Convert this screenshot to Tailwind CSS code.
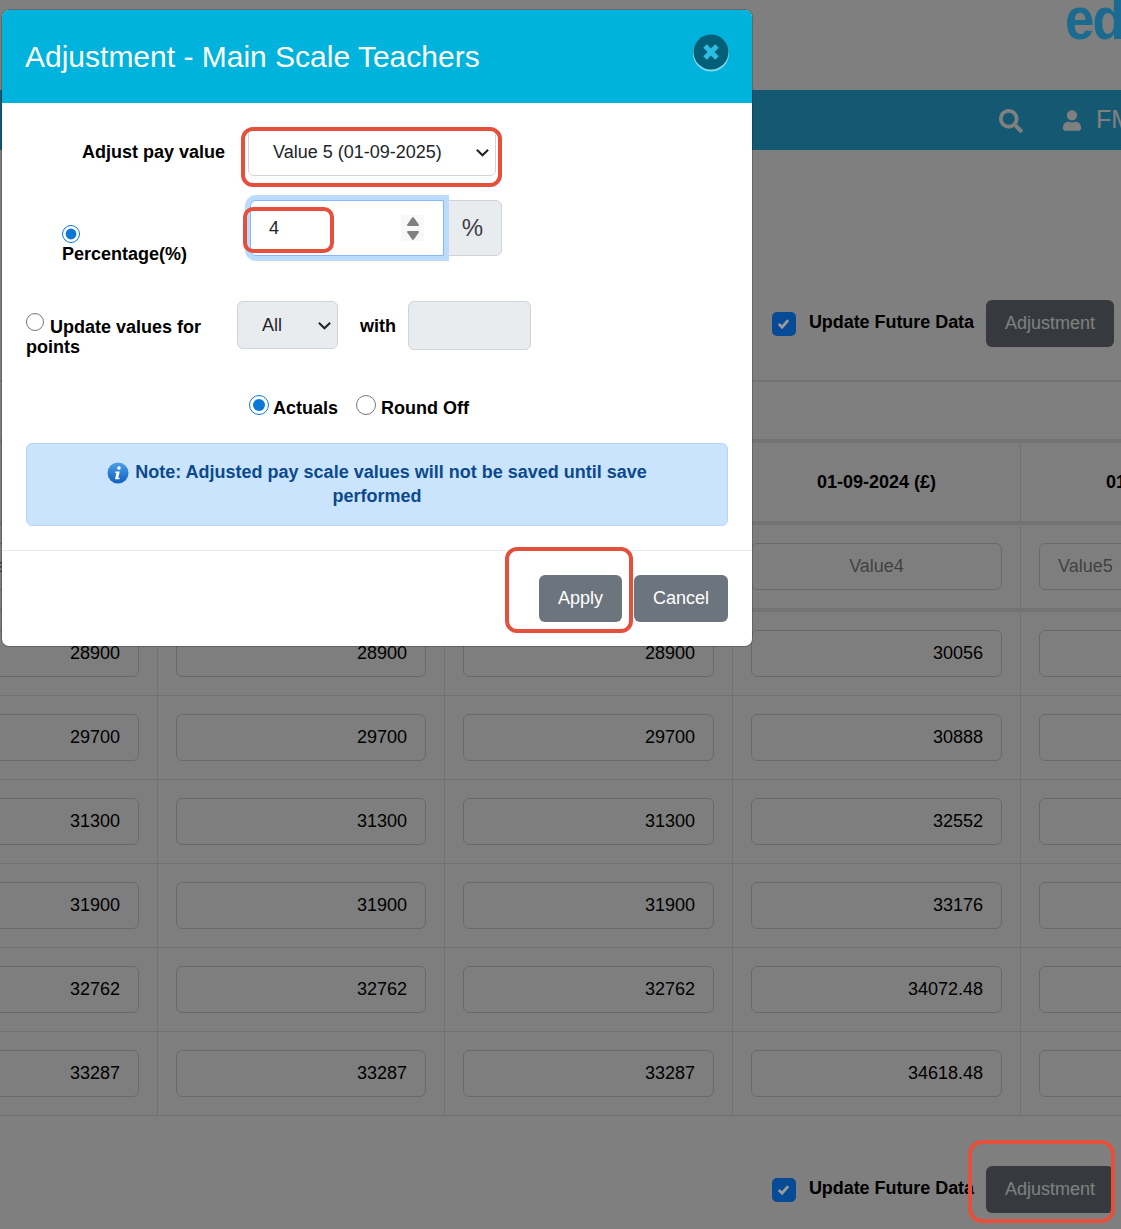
<!DOCTYPE html>
<html lang="en">
<head>
  <meta charset="UTF-8" />
  <title>Adjustment - Main Scale Teachers</title>
  <script src="https://cdn.jsdelivr.net/npm/@tailwindcss/browser@4"></script>
</head>
<body class="bg-white font-['Liberation_Sans',Arial,sans-serif]">
  <div class="relative w-[1121px] h-[1229px] overflow-hidden">

    <!-- page behind the modal -->
    <div class="h-[90px] pl-[1065px] overflow-hidden whitespace-nowrap">
      <span class="block relative z-10 text-[#1a6b8f] font-bold text-[60px] leading-[37px] tracking-[-2px] origin-left scale-x-[0.88] blur-[0.6px]">edu</span>
    </div>
    <nav class="h-[60px] bg-[#2ab0e4] flex items-center pl-[999px] text-white">
      <svg class="w-[24px] h-[24px] shrink-0 mt-[2px]" viewBox="0 0 512 512" fill="currentColor"><path d="M505 442.7L405.3 343c-4.5-4.5-10.6-7-17-7H372c27.6-35.3 44-79.7 44-128C416 93.1 322.9 0 208 0S0 93.1 0 208s93.1 208 208 208c48.3 0 92.7-16.4 128-44v16.3c0 6.4 2.5 12.5 7 17l99.7 99.7c9.4 9.4 24.6 9.4 33.9 0l28.3-28.3c9.4-9.4 9.4-24.6.1-34zM208 336c-70.7 0-128-57.2-128-128 0-70.7 57.2-128 128-128 70.7 0 128 57.2 128 128 0 70.7-57.2 128-128 128z"/></svg>
      <svg class="w-[18px] h-[21px] shrink-0 ml-[40px]" viewBox="0 0 448 512" fill="currentColor"><path d="M224 256c70.7 0 128-57.3 128-128S294.7 0 224 0 96 57.3 96 128s57.3 128 128 128zm89.6 32h-16.7c-22.2 10.2-46.9 16-72.9 16s-50.6-5.8-72.9-16h-16.7C60.2 288 0 348.2 0 422.4V464c0 26.5 21.5 48 48 48h352c26.5 0 48-21.5 48-48v-41.6c0-74.2-60.2-134.4-134.4-134.4z"/></svg>
      <span class="ml-[15px] text-[25px] whitespace-nowrap">FM</span>
    </nav>

    <div class="h-[230px] pt-[150px]">
      <div class="flex items-center justify-end pr-[7px] h-[47px]">
        <span class="relative z-10 w-[24px] h-[24px] rounded-[5px] bg-[#074a96] flex items-center justify-center">
          <svg class="w-[13px] h-[13px]" viewBox="0 0 14 14" fill="none" stroke="#9a9a9a" stroke-width="3"><path d="M2 7.5l3.5 3.5L12 3.5"/></svg>
        </span>
        <span class="ml-[13px] mr-[12px] -mt-[3px] text-[18px] font-bold text-black tracking-[-0.05px]">Update Future Data</span>
        <button class="w-[128px] h-[47px] rounded-[6px] bg-[#6c757d] text-white text-[18px]">Adjustment</button>
      </div>
    </div>

    <div class="border-t-[2px] border-[#e6e6e6] h-[59px]"></div>
    <div id="tabel" class="border-t-[4px] border-[#e6e6e6] bg-[#fcfcfc]"></div>

    <div class="flex items-center justify-end pr-[7px] h-[47px] mt-[50px]">
      <span class="relative z-10 w-[24px] h-[24px] rounded-[5px] bg-[#074a96] flex items-center justify-center">
        <svg class="w-[13px] h-[13px]" viewBox="0 0 14 14" fill="none" stroke="#9a9a9a" stroke-width="3"><path d="M2 7.5l3.5 3.5L12 3.5"/></svg>
      </span>
      <span class="ml-[13px] mr-[12px] -mt-[3px] text-[18px] font-bold text-black tracking-[-0.05px]">Update Future Data</span>
      <button class="w-[128px] h-[47px] rounded-[6px] bg-[#6c757d] text-white text-[18px]">Adjustment</button>
    </div>

    <!-- backdrop -->
    <div class="absolute inset-0 bg-black/50"></div>

    <!-- modal -->
    <div class="absolute isolate left-[2px] top-[10px] w-[750px] h-[636px] bg-white rounded-[7px] overflow-hidden flex flex-col text-[18px] text-black shadow-[0_0_0_1px_rgba(0,0,0,0.2)]">
      <div class="h-[93px] shrink-0 bg-[#00b3dc] flex items-center justify-between pl-[23px] pr-[23px]">
        <h1 class="text-[30px] text-white -mt-[1px] leading-[45px]">Adjustment - Main Scale Teachers</h1>
        <svg class="w-[36px] h-[38px] -mt-[8px]" viewBox="0 0 36 38">
          <circle cx="18" cy="19.5" r="18" fill="#7fd6ec"/>
          <circle cx="18" cy="18" r="17.5" fill="#035e78"/>
          <path d="M12 12l12 12M24 12L12 24" stroke="#2bbde2" stroke-width="5"/>
        </svg>
      </div>

      <div class="flex-1 px-[24px]">
        <div class="flex items-center mt-[25px] h-[48px]">
          <label class="w-[199px] text-right font-bold">Adjust pay value</label>
          <div class="ml-[23px] w-[248px] h-[48px] border border-[#ced4da] rounded-[6px] flex items-center justify-between pl-[24px] pr-[5px]">
            <span class="text-[#212529]">Value 5 (01-09-2025)</span>
            <svg class="w-[15px] h-[15px]" viewBox="0 0 16 16" fill="none" stroke="#212529" stroke-width="2.2"><path d="M2 5l6 6 6-6"/></svg>
          </div>
        </div>

        <div class="flex items-start mt-[24px] h-[56px]">
          <div class="w-[222px] pl-[36px] pt-[25px] leading-[20px]">
            <input type="radio" name="soort" checked class="block w-[18px] h-[18px] m-0 accent-[#0b78d8]" />
            <label class="block font-bold pt-[1px]">Percentage(%)</label>
          </div>
          <div class="flex h-[56px]">
            <div class="ml-[2px] w-[194px] h-[56px] border-[1.5px] border-[#86b7fe] rounded-l-[6px] shadow-[0_0_0_5px_#bcdcfd] flex items-center justify-between pl-[18px] pr-[19px] z-10 bg-white">
              <span class="text-[#212529]">4</span>
              <span class="w-[23px] h-[26px] bg-[#f8f8f8] flex items-center justify-center">
                <svg class="w-[14px] h-[26px]" viewBox="0 0 14 26" fill="#808080" stroke="#808080" stroke-width="2" stroke-linejoin="round"><path d="M7 3l5 7H2zM7 24l-5-7h10z"/></svg>
              </span>
            </div>
            <div class="w-[59px] h-[56px] -ml-[1px] bg-[#e9ecef] border border-[#ced4da] rounded-r-[6px] flex items-center justify-center text-[#3c4044] text-[24px]">%</div>
          </div>
        </div>

        <div class="flex items-start mt-[45px] h-[49px]">
          <div class="w-[211px] font-bold leading-[20px] pt-[12px]">
            <input type="radio" name="soort" class="w-[18px] h-[18px] m-0 mr-[6px] align-[2px] accent-[#0b78d8]" />Update values for points
          </div>
          <div class="w-[101px] h-[48px] bg-[#e9ecef] border border-[#ced4da] rounded-[6px] flex items-center justify-between pl-[24px] pr-[5px] text-[#212529]">
            <span>All</span>
            <svg class="w-[15px] h-[15px]" viewBox="0 0 16 16" fill="none" stroke="#212529" stroke-width="2.2"><path d="M2 5l6 6 6-6"/></svg>
          </div>
          <span class="font-bold ml-[22px] mt-[12px]">with</span>
          <div class="w-[123px] h-[49px] ml-[12px] bg-[#e9ecef] border border-[#ced4da] rounded-[6px]"></div>
        </div>

        <div class="flex items-center mt-[42px] h-[30px] pl-[223px] font-bold">
          <input type="radio" name="afronding" checked class="w-[20px] h-[20px] m-0 -mt-[5px] accent-[#0b78d8]" />
          <span class="ml-[4px] mt-[2px]">Actuals</span>
          <input type="radio" name="afronding" class="w-[20px] h-[20px] m-0 -mt-[5px] ml-[18px] accent-[#0b78d8]" />
          <span class="ml-[5px] mt-[2px]">Round Off</span>
        </div>

        <div class="mt-[21px] h-[83px] bg-[#cbe4fe] border border-[#b6d4fe] rounded-[6px] px-[40px] pt-[16px] text-center font-bold text-[#0b4a8c] leading-[24px]">
          <svg class="inline-block w-[22px] h-[22px] align-[-6px] mr-[6px]" viewBox="0 0 22 22">
            <defs><linearGradient id="infoVerloop" x1="0" y1="0" x2="0" y2="1"><stop offset="0" stop-color="#4d9ee8"/><stop offset="1" stop-color="#0f5fc0"/></linearGradient></defs>
            <circle cx="11" cy="11" r="10.500" fill="url(#infoVerloop)"/>
            <circle cx="12" cy="6" r="1.800" fill="white"/>
            <path d="M8.500 9.500h4.300l-1.600 6.300h1.600l-.4 1.400H8l1.400-6.300H8.200z" fill="white"/>
          </svg>Note: Adjusted pay scale values will not be saved until save performed
        </div>
      </div>

      <div class="h-[96px] shrink-0 border-t border-[#e9ecef] flex items-start justify-end gap-[12px] pt-[24px] pr-[24px]">
        <button class="w-[83px] h-[47px] rounded-[6px] bg-[#6c757d] text-white text-[18px]">Apply</button>
        <button class="w-[94px] h-[47px] rounded-[6px] bg-[#6c757d] text-white text-[18px]">Cancel</button>
      </div>
    </div>

    <!-- red annotation boxes -->
    <div class="absolute left-[241px] top-[127px] w-[261px] h-[60px] border-[4px] border-[#e5503c] rounded-[12px]"></div>
    <div class="absolute left-[243px] top-[207px] w-[91px] h-[46px] border-[4px] border-[#e5503c] rounded-[10px]"></div>
    <div class="absolute left-[505px] top-[547px] w-[128px] h-[86px] border-[4px] border-[#e5503c] rounded-[12px]"></div>
    <div class="absolute left-[968px] top-[1140px] w-[147px] h-[83px] border-[4px] border-[#e5503c] rounded-[14px]"></div>
  </div>

  <script>
    const rijen = [
      ["28900", "28900", "28900", "30056"],
      ["29700", "29700", "29700", "30888"],
      ["31300", "31300", "31300", "32552"],
      ["31900", "31900", "31900", "33176"],
      ["32762", "32762", "32762", "34072.48"],
      ["33287", "33287", "33287", "34618.48"]
    ];
    const kolommen = "grid grid-cols-[158px_287px_288px_288px_1fr]";
    const veld = "w-[251px] h-[47px] shrink-0 border border-[#ced4da] rounded-[6px] bg-transparent px-[18px] text-[18px] outline-none";
    const smalVeld = "w-[250px] h-[47px] shrink-0 border border-[#ced4da] rounded-[6px] bg-transparent px-[18px] text-[18px] outline-none";

    function cel(inhoud, eerste) {
      const plek = eerste ? "justify-end pr-[18px]" : "pl-[18px]";
      return `<div class="border-r border-[#dee2e6] flex items-center overflow-hidden ${plek}">${inhoud}</div>`;
    }

    let html = `<div class="${kolommen} h-[78px] border-b-[4px] border-[#e6e6e6] box-content">`
      + cel("", true) + cel("", false) + cel("", false)
      + `<div class="border-r border-[#dee2e6] flex items-center justify-center font-bold text-[18px] text-black">01-09-2024 (£)</div>`
      + `<div class="flex items-center pl-[85px] font-bold text-[18px] whitespace-nowrap text-black">01-09-2025 (£)</div></div>`;

    html += `<div class="${kolommen} h-[83px] border-b-[4px] border-[#e6e6e6] box-content">`
      + ["Value1", "Value2", "Value3", "Value4"].map((v, i) =>
          cel(`<input class="${i === 1 ? smalVeld : veld} text-center" placeholder="${v}" />`, i === 0)).join("")
      + `<div class="flex items-center pl-[18px] overflow-hidden"><input class="${veld} text-left" placeholder="Value5" /></div></div>`;

    rijen.forEach(r => {
      html += `<div class="${kolommen} h-[84px] border-b border-[#dee2e6]">`
        + r.map((v, i) => cel(`<input class="${i === 1 ? smalVeld : veld} text-right text-black" value="${v}" />`, i === 0)).join("")
        + `<div class="flex items-center pl-[18px] overflow-hidden"><input class="${veld}" /></div></div>`;
    });

    document.getElementById("tabel").innerHTML = html;
  </script>
</body>
</html>
